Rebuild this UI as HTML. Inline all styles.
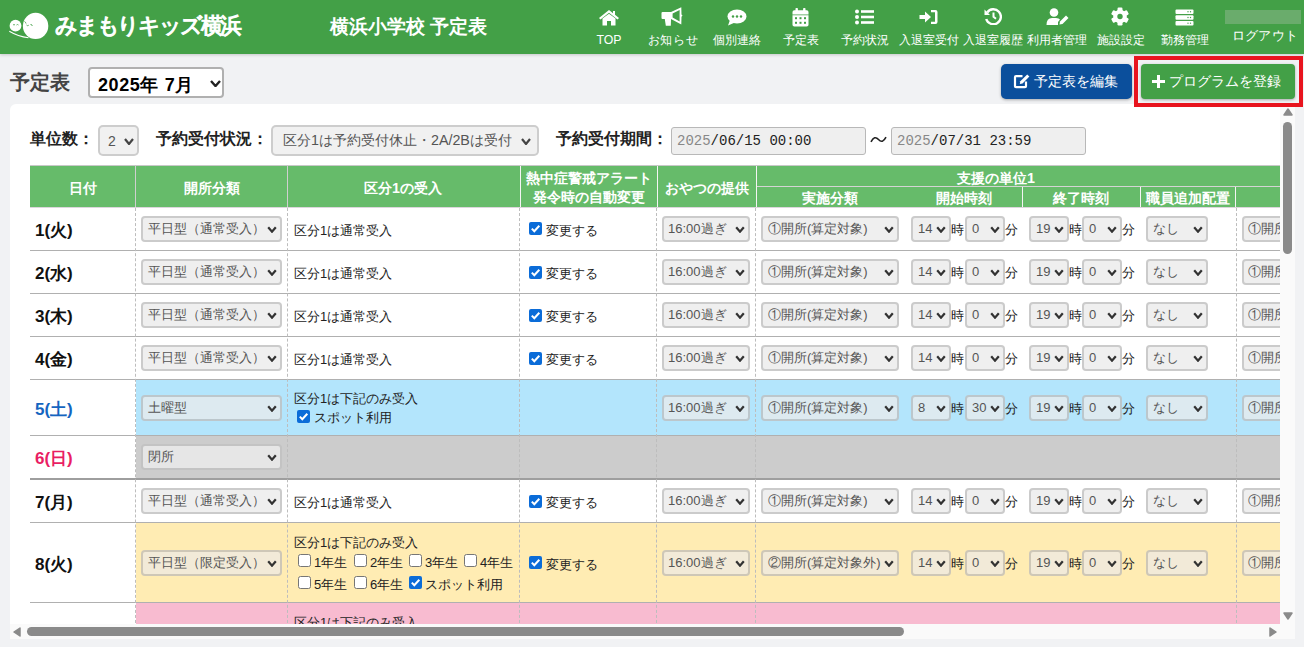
<!DOCTYPE html><html><head><meta charset="utf-8"><style>
*{box-sizing:border-box;margin:0;padding:0}
html,body{width:1304px;height:647px;overflow:hidden}
body{background:#f1f2f4;font-family:"Liberation Sans",sans-serif;position:relative;color:#222}
.abs{position:absolute}
.nav{position:absolute;top:0;left:0;width:1304px;height:54px;background:#43a047;box-shadow:0 1px 3px rgba(0,0,0,.18)}
.ni{position:absolute;top:33px;font-size:12.3px;color:#fff;white-space:nowrap;line-height:14px;text-align:center;width:80px}
.ic{position:absolute}
.sel{position:absolute;border:2px solid rgba(0,0,0,0.15);border-radius:4px;background:#f1f1f1;font-size:13px;color:#555;white-space:nowrap;overflow:hidden}
.sel .t{position:absolute;left:5px;top:4px;line-height:15px}
svg{display:block}
.txt{position:absolute;font-size:13px;color:#222;white-space:nowrap;line-height:15px}
.hd{position:absolute;font-size:14.3px;font-weight:bold;color:#fff;white-space:nowrap;text-align:center;line-height:17px}
.cb{position:absolute;width:13px;height:13px;border-radius:2px}
.cb.on{background:#0b6cd8}
.cb.off{background:#fff;border:1px solid #555}
.vd{position:absolute;width:0;border-left:1px dashed #bdbdbd}
</style></head><body><div class="nav"><svg class="abs" style="left:0px;top:5px" width="60" height="40" viewBox="0 5 60 40">
<ellipse cx="35.6" cy="25.9" rx="12.7" ry="13.1" fill="#fff"/>
<circle cx="15.5" cy="25.7" r="5.9" fill="#fff"/>
<path d="M9.3 31.3 Q18 36.5 28.5 37.8" stroke="#fff" stroke-width="1.1" fill="none"/>
<path d="M24.5 21.5 q1.2 0.5 1.5 2 M26.5 25 q1 1.2 2.2 0.3 M30.5 24.5 q1.3 -0.5 1.8 1.5" stroke="#43a047" stroke-width="0.9" fill="none"/>
<path d="M13 25 q1 -1 2 0 M16.5 25 q1 -1 2 0" stroke="#43a047" stroke-width="0.8" fill="none"/>
</svg><div class="abs" style="left:55px;top:12px;font-size:22px;font-weight:normal;color:#fff;line-height:28px;letter-spacing:-2.2px;white-space:nowrap;-webkit-text-stroke:1.1px #fff">みまもりキッズ横浜</div><div class="abs" style="left:330px;top:16px;font-size:19px;font-weight:bold;color:#fff;line-height:22px;white-space:nowrap">横浜小学校 予定表</div><div class="ic" style="left:598px;top:9px"><svg width="22" height="17" viewBox="0 0 22 17"><path d="M11 1 L1 9 L2.5 10.5 L11 3.8 L19.5 10.5 L21 9 L17 5.8 V2 H15 V4.2 Z" fill="#fff"/><path d="M4.5 9.5 L11 4.8 L17.5 9.5 V16.5 H13 V12 H9 V16.5 H4.5 Z" fill="#fff"/></svg></div><div class="ni" style="left:569px;">TOP</div><div class="ic" style="left:661px;top:7px"><svg width="22" height="20" viewBox="0 0 22 20"><path d="M1.5 5 H10 V12 H1.5 Q0.5 12 0.5 11 V6 Q0.5 5 1.5 5 Z" fill="#fff"/><path d="M3.8 12 H10 L9.8 18.7 H4.8 Z" fill="#fff"/><path d="M10 5 L20.3 0.3 L20.5 7.5 L21.5 8.6 L20.5 9.7 L20.3 17.5 L10 12 Z" fill="#fff"/><path d="M11.6 6.6 L18.6 3 V14.6 L11.6 10.6 Z" fill="#43a047"/></svg></div><div class="ni" style="left:633px;letter-spacing:0.6px;">お知らせ</div><div class="ic" style="left:727px;top:9px"><svg width="20" height="17" viewBox="0 0 20 17"><ellipse cx="10" cy="7.5" rx="9.5" ry="7" fill="#fff"/><path d="M3 11 L1 16.5 L8 13.5 Z" fill="#fff"/><circle cx="6" cy="7.5" r="1.2" fill="#43a047"/><circle cx="10" cy="7.5" r="1.2" fill="#43a047"/><circle cx="14" cy="7.5" r="1.2" fill="#43a047"/></svg></div><div class="ni" style="left:697px;">個別連絡</div><div class="ic" style="left:792px;top:8px"><svg width="17" height="19" viewBox="0 0 17 19"><g fill="#fff"><rect x="3.5" y="0" width="2.4" height="4" rx="0.8"/><rect x="11.1" y="0" width="2.4" height="4" rx="0.8"/><path d="M0.5 4 Q0.5 2.2 2.3 2.2 H14.7 Q16.5 2.2 16.5 4 V6.4 H0.5 Z"/><path d="M0.5 7.2 H16.5 V16.8 Q16.5 18.5 14.7 18.5 H2.3 Q0.5 18.5 0.5 16.8 Z"/></g><g fill="#43a047"><rect x="3" y="9.2" width="2" height="2"/><rect x="7.5" y="9.2" width="2" height="2"/><rect x="12" y="9.2" width="2" height="2"/><rect x="3" y="13.8" width="2" height="2"/><rect x="7.5" y="13.8" width="2" height="2"/><rect x="12" y="13.8" width="2" height="2"/></g></svg></div><div class="ni" style="left:761px;">予定表</div><div class="ic" style="left:855px;top:9px"><svg width="19" height="16" viewBox="0 0 19 16"><circle cx="2" cy="2.5" r="2" fill="#fff"/><circle cx="2" cy="8" r="2" fill="#fff"/><circle cx="2" cy="13.5" r="2" fill="#fff"/><rect x="6" y="1.2" width="13" height="2.6" fill="#fff"/><rect x="6" y="6.7" width="13" height="2.6" fill="#fff"/><rect x="6" y="12.2" width="13" height="2.6" fill="#fff"/></svg></div><div class="ni" style="left:825px;">予約状況</div><div class="ic" style="left:919px;top:9px"><svg width="19" height="16" viewBox="0 0 19 16"><path d="M0.5 6 H6 V2.5 L12 8 L6 13.5 V10 H0.5 Z" fill="#fff"/><path d="M12 1 H16.5 Q18.5 1 18.5 3 V13 Q18.5 15 16.5 15 H12 V12.8 H16 V3.2 H12 Z" fill="#fff"/></svg></div><div class="ni" style="left:889px;letter-spacing:-0.1px;">入退室受付</div><div class="ic" style="left:984px;top:8px"><svg width="18" height="17" viewBox="0 0 18 17"><path d="M3.2 4.5 A7.5 7.5 0 1 1 2.2 11" stroke="#fff" stroke-width="2.4" fill="none"/><path d="M0.5 1.5 L6 7 H0.5 Z" fill="#fff"/><path d="M9.5 4.5 V8.8 L12 10.8" stroke="#fff" stroke-width="2" fill="none"/></svg></div><div class="ni" style="left:953px;letter-spacing:-0.1px;">入退室履歴</div><div class="ic" style="left:1046px;top:8px"><svg width="23" height="17" viewBox="0 0 23 17"><circle cx="8" cy="4.5" r="4.3" fill="#fff"/><path d="M0.5 17 Q0.5 10 6 10 H10 Q13 10 14 11.5 L12 14 V17 Z" fill="#fff"/><path d="M13.5 16.5 L14 13.5 L20 7.5 L22.5 10 L16.5 16 Z" fill="#fff"/></svg></div><div class="ni" style="left:1017px;letter-spacing:-0.1px;">利用者管理</div><div class="ic" style="left:1111px;top:7px"><svg width="18" height="19" viewBox="0 0 18 19"><g fill="#fff"><circle cx="9" cy="9.5" r="6.8"/><rect x="6.5" y="0.5" width="5" height="18" rx="1.2"/><rect x="6.5" y="0.5" width="5" height="18" rx="1.2" transform="rotate(60 9 9.5)"/><rect x="6.5" y="0.5" width="5" height="18" rx="1.2" transform="rotate(120 9 9.5)"/></g><circle cx="9" cy="9.5" r="2.7" fill="#43a047"/></svg></div><div class="ni" style="left:1081px;">施設設定</div><div class="ic" style="left:1175px;top:9px"><svg width="19" height="17" viewBox="0 0 19 17"><g fill="#fff"><rect x="0.5" y="0.5" width="18" height="4.5" rx="1"/><rect x="0.5" y="6.2" width="18" height="4.5" rx="1"/><rect x="0.5" y="11.9" width="18" height="4.5" rx="1"/></g><g fill="#43a047"><circle cx="13" cy="2.75" r=".7"/><circle cx="15.5" cy="2.75" r=".7"/><circle cx="13" cy="8.45" r=".7"/><circle cx="15.5" cy="8.45" r=".7"/><circle cx="13" cy="14.15" r=".7"/><circle cx="15.5" cy="14.15" r=".7"/></g></svg></div><div class="ni" style="left:1145px;">勤務管理</div><div class="abs" style="left:1225px;top:10px;width:76px;height:14px;background:#6aac6c"></div><div class="ni" style="left:1225px;top:29px;font-size:13px;letter-spacing:0.3px">ログアウト</div></div><div class="abs" style="left:10px;top:70px;font-size:20px;font-weight:bold;color:#444;line-height:24px">予定表</div><div class="abs" style="left:88px;top:67px;width:136px;height:31px;border:2px solid #b0b0b0;border-radius:4px;background:#fff"><div class="abs" style="left:8px;top:6px;font-size:18px;font-weight:bold;color:#000;line-height:20px;white-space:nowrap;letter-spacing:0.6px">2025年 7月</div><div class="abs" style="left:120px;top:11px"><svg width="11" height="7" viewBox="0 0 11 7"><path d="M1 1 L5.5 6 L10 1" stroke="#222" stroke-width="2.4" fill="none"/></svg></div></div><div class="abs" style="left:1001px;top:64px;width:131px;height:35px;background:#0b4f9c;border-radius:5px;box-shadow:0 1px 3px rgba(0,0,0,.3)"></div><svg class="abs" style="left:1013px;top:73px" width="18" height="16" viewBox="0 0 18 16"><path d="M9.5 3.2 H3 Q2 3.2 2 4.2 V13.2 Q2 14.2 3 14.2 H12 Q13 14.2 13 13.2 V8.5" stroke="#fff" stroke-width="2.2" fill="none"/><path d="M6.8 11 L7.3 8.3 L14.2 1.4 L16.4 3.6 L9.5 10.5 Z" fill="#fff"/></svg><div class="abs" style="left:1034px;top:73px;font-size:14.2px;color:#fff;line-height:17px;white-space:nowrap">予定表を編集</div><div class="abs" style="left:1141px;top:64px;width:154px;height:35px;background:#43a047;border-radius:4px;box-shadow:0 1px 3px rgba(0,0,0,.3)"></div><svg class="abs" style="left:1152px;top:75px" width="13" height="13" viewBox="0 0 13 13"><rect x="5" y="0" width="3" height="13" fill="#fff"/><rect x="0" y="5" width="13" height="3" fill="#fff"/></svg><div class="abs" style="left:1169px;top:73px;font-size:14.2px;color:#fff;line-height:17px;white-space:nowrap">プログラムを登録</div><div class="abs" style="left:10px;top:104px;width:1285px;height:535px;background:#fff;border-radius:6px 6px 0 0"></div><div class="abs" style="left:30px;top:130px;font-size:16px;font-weight:bold;color:#222;line-height:18px;white-space:nowrap">単位数：</div><div class="sel" style="left:98px;top:125px;width:41px;height:31px;border-radius:5px"><div class="t" style="left:8px;top:6px;font-size:14px;line-height:17px">2</div><div class="abs" style="left:24px;top:11px"><svg width="10" height="7" viewBox="0 0 10 7"><path d="M1 1 L5.0 6 L9 1" stroke="#444" stroke-width="2.2" fill="none"/></svg></div></div><div class="abs" style="left:156px;top:130px;font-size:16px;font-weight:bold;color:#222;line-height:18px;white-space:nowrap">予約受付状況：</div><div class="sel" style="left:271px;top:125px;width:268px;height:31px;border-radius:5px"><div class="t" style="left:10px;top:5px;font-size:14.3px;line-height:17px">区分1は予約受付休止・2A/2Bは受付</div><div class="abs" style="left:248px;top:11px"><svg width="10" height="7" viewBox="0 0 10 7"><path d="M1 1 L5.0 6 L9 1" stroke="#444" stroke-width="2.2" fill="none"/></svg></div></div><div class="abs" style="left:556px;top:130px;font-size:16px;font-weight:bold;color:#222;line-height:18px;white-space:nowrap">予約受付期間：</div><div class="abs" style="left:671px;top:127px;width:195px;height:28px;border:1.5px solid #b8b8b8;border-radius:3px;background:#efefef"><div class="abs" style="left:5px;top:5px;font-family:'Liberation Mono',monospace;font-size:14px;line-height:16px;color:#222;white-space:nowrap"><span style="color:#888">2025</span>/06/15 00:00</div></div><div class="abs" style="left:891px;top:127px;width:195px;height:28px;border:1.5px solid #b8b8b8;border-radius:3px;background:#efefef"><div class="abs" style="left:5px;top:5px;font-family:'Liberation Mono',monospace;font-size:14px;line-height:16px;color:#222;white-space:nowrap"><span style="color:#888">2025</span>/07/31 23:59</div></div><svg class="abs" style="left:870px;top:135px" width="17" height="9" viewBox="0 0 17 9"><path d="M1 6.8 Q4.5 0 8.5 4.5 Q12.5 9 16 2.2" stroke="#222" stroke-width="1.6" fill="none"/></svg><div class="abs" style="left:0;top:0;width:1280px;height:624px;overflow:hidden"><div class="abs" style="left:30px;top:165px;width:1260px;height:1px;background:#c8c8c8"></div><div class="abs" style="left:30px;top:166px;width:1260px;height:41px;background:#66bb6a"></div><div class="abs" style="left:135px;top:166px;width:1px;height:41px;background:#cfcfcf"></div><div class="abs" style="left:287px;top:166px;width:1px;height:41px;background:#cfcfcf"></div><div class="abs" style="left:520px;top:166px;width:1px;height:41px;background:#f4f4f4"></div><div class="abs" style="left:657px;top:166px;width:1px;height:41px;background:#f4f4f4"></div><div class="abs" style="left:756px;top:166px;width:1px;height:41px;background:#f4f4f4"></div><div class="abs" style="left:757px;top:186px;width:540px;height:1px;background:#d4d4d4"></div><div class="abs" style="left:1022px;top:187px;width:1px;height:20px;background:#f4f4f4"></div><div class="abs" style="left:1140px;top:187px;width:1px;height:20px;background:#f4f4f4"></div><div class="abs" style="left:1235px;top:187px;width:1px;height:20px;background:#f4f4f4"></div><div class="abs" style="left:30px;top:207px;width:1260px;height:1px;background:#dcd6dc"></div><div class="hd" style="left:-17.0px;top:180px;width:200px">日付</div><div class="hd" style="left:112.0px;top:180px;width:200px">開所分類</div><div class="hd" style="left:303.0px;top:180px;width:200px">区分1の受入</div><div class="hd" style="left:489.0px;top:170px;width:200px">熱中症警戒アラート</div><div class="hd" style="left:489.0px;top:189px;width:200px">発令時の自動変更</div><div class="hd" style="left:607.0px;top:180px;width:200px">おやつの提供</div><div class="hd" style="left:896.0px;top:170px;width:200px">支援の単位1</div><div class="hd" style="left:730.0px;top:190px;width:200px">実施分類</div><div class="hd" style="left:864.0px;top:190px;width:200px">開始時刻</div><div class="hd" style="left:981.0px;top:190px;width:200px">終了時刻</div><div class="hd" style="left:1088.0px;top:190px;width:200px">職員追加配置</div><div class="abs" style="left:30px;top:250px;width:1260px;height:1px;background:#b0b0b0"></div><div class="abs" style="left:35px;top:220.5px;font-size:17px;font-weight:bold;color:#111;line-height:20px;white-space:nowrap">1(火)</div><div class="sel" style="left:141px;top:216px;width:141px;height:26px;background:#efefef"><div class="t" style="left:5px;top:3px">平日型（通常受入）</div><div class="abs" style="left:124px;top:8px"><svg width="10" height="7" viewBox="0 0 10 7"><path d="M1.2 1.2 L5.0 5.7 L8.8 1.2" stroke="#333" stroke-width="2.2" fill="none"/></svg></div></div><div class="txt" style="left:294px;top:222.5px">区分1は通常受入</div><svg class="abs" style="left:529px;top:222px" width="13" height="13" viewBox="0 0 13 13"><rect x="0" y="0" width="13" height="13" rx="2" fill="#0b6cd8"/><path d="M2.8 6.6 L5.3 9.2 L10.3 3.8" stroke="#fff" stroke-width="2" fill="none"/></svg><div class="txt" style="left:546px;top:222.5px">変更する</div><div class="sel" style="left:662px;top:216px;width:88px;height:26px;background:#efefef"><div class="t" style="left:4px;top:3px">16:00過ぎ</div><div class="abs" style="left:71px;top:8px"><svg width="10" height="7" viewBox="0 0 10 7"><path d="M1.2 1.2 L5.0 5.7 L8.8 1.2" stroke="#333" stroke-width="2.2" fill="none"/></svg></div></div><div class="sel" style="left:761px;top:216px;width:138px;height:26px;background:#efefef"><div class="t" style="left:5px;top:3px">①開所(算定対象)</div><div class="abs" style="left:121px;top:8px"><svg width="10" height="7" viewBox="0 0 10 7"><path d="M1.2 1.2 L5.0 5.7 L8.8 1.2" stroke="#333" stroke-width="2.2" fill="none"/></svg></div></div><div class="sel" style="left:911px;top:216px;width:40px;height:26px;background:#efefef"><div class="t" style="left:5px;top:3px">14</div><div class="abs" style="left:23px;top:8px"><svg width="10" height="7" viewBox="0 0 10 7"><path d="M1.2 1.2 L5.0 5.7 L8.8 1.2" stroke="#333" stroke-width="2.2" fill="none"/></svg></div></div><div class="txt" style="left:951px;top:221.5px">時</div><div class="sel" style="left:965px;top:216px;width:40px;height:26px;background:#efefef"><div class="t" style="left:5px;top:3px">0</div><div class="abs" style="left:23px;top:8px"><svg width="10" height="7" viewBox="0 0 10 7"><path d="M1.2 1.2 L5.0 5.7 L8.8 1.2" stroke="#333" stroke-width="2.2" fill="none"/></svg></div></div><div class="txt" style="left:1005px;top:221.5px">分</div><div class="sel" style="left:1029px;top:216px;width:40px;height:26px;background:#efefef"><div class="t" style="left:5px;top:3px">19</div><div class="abs" style="left:23px;top:8px"><svg width="10" height="7" viewBox="0 0 10 7"><path d="M1.2 1.2 L5.0 5.7 L8.8 1.2" stroke="#333" stroke-width="2.2" fill="none"/></svg></div></div><div class="txt" style="left:1069px;top:221.5px">時</div><div class="sel" style="left:1082px;top:216px;width:40px;height:26px;background:#efefef"><div class="t" style="left:5px;top:3px">0</div><div class="abs" style="left:23px;top:8px"><svg width="10" height="7" viewBox="0 0 10 7"><path d="M1.2 1.2 L5.0 5.7 L8.8 1.2" stroke="#333" stroke-width="2.2" fill="none"/></svg></div></div><div class="txt" style="left:1122px;top:221.5px">分</div><div class="sel" style="left:1146px;top:216px;width:62px;height:26px;background:#efefef"><div class="t" style="left:5px;top:3px">なし</div><div class="abs" style="left:45px;top:8px"><svg width="10" height="7" viewBox="0 0 10 7"><path d="M1.2 1.2 L5.0 5.7 L8.8 1.2" stroke="#333" stroke-width="2.2" fill="none"/></svg></div></div><div class="sel" style="left:1242px;top:216px;width:140px;height:26px;background:#efefef"><div class="t" style="left:4px;top:3px">①開所(算定対象)</div><div class="abs" style="left:123px;top:8px"><svg width="10" height="7" viewBox="0 0 10 7"><path d="M1.2 1.2 L5.0 5.7 L8.8 1.2" stroke="#333" stroke-width="2.2" fill="none"/></svg></div></div><div class="abs" style="left:30px;top:293px;width:1260px;height:1px;background:#b0b0b0"></div><div class="abs" style="left:35px;top:264.0px;font-size:17px;font-weight:bold;color:#111;line-height:20px;white-space:nowrap">2(水)</div><div class="sel" style="left:141px;top:259px;width:141px;height:26px;background:#efefef"><div class="t" style="left:5px;top:3px">平日型（通常受入）</div><div class="abs" style="left:124px;top:8px"><svg width="10" height="7" viewBox="0 0 10 7"><path d="M1.2 1.2 L5.0 5.7 L8.8 1.2" stroke="#333" stroke-width="2.2" fill="none"/></svg></div></div><div class="txt" style="left:294px;top:266.0px">区分1は通常受入</div><svg class="abs" style="left:529px;top:266px" width="13" height="13" viewBox="0 0 13 13"><rect x="0" y="0" width="13" height="13" rx="2" fill="#0b6cd8"/><path d="M2.8 6.6 L5.3 9.2 L10.3 3.8" stroke="#fff" stroke-width="2" fill="none"/></svg><div class="txt" style="left:546px;top:266.0px">変更する</div><div class="sel" style="left:662px;top:259px;width:88px;height:26px;background:#efefef"><div class="t" style="left:4px;top:3px">16:00過ぎ</div><div class="abs" style="left:71px;top:8px"><svg width="10" height="7" viewBox="0 0 10 7"><path d="M1.2 1.2 L5.0 5.7 L8.8 1.2" stroke="#333" stroke-width="2.2" fill="none"/></svg></div></div><div class="sel" style="left:761px;top:259px;width:138px;height:26px;background:#efefef"><div class="t" style="left:5px;top:3px">①開所(算定対象)</div><div class="abs" style="left:121px;top:8px"><svg width="10" height="7" viewBox="0 0 10 7"><path d="M1.2 1.2 L5.0 5.7 L8.8 1.2" stroke="#333" stroke-width="2.2" fill="none"/></svg></div></div><div class="sel" style="left:911px;top:259px;width:40px;height:26px;background:#efefef"><div class="t" style="left:5px;top:3px">14</div><div class="abs" style="left:23px;top:8px"><svg width="10" height="7" viewBox="0 0 10 7"><path d="M1.2 1.2 L5.0 5.7 L8.8 1.2" stroke="#333" stroke-width="2.2" fill="none"/></svg></div></div><div class="txt" style="left:951px;top:265.0px">時</div><div class="sel" style="left:965px;top:259px;width:40px;height:26px;background:#efefef"><div class="t" style="left:5px;top:3px">0</div><div class="abs" style="left:23px;top:8px"><svg width="10" height="7" viewBox="0 0 10 7"><path d="M1.2 1.2 L5.0 5.7 L8.8 1.2" stroke="#333" stroke-width="2.2" fill="none"/></svg></div></div><div class="txt" style="left:1005px;top:265.0px">分</div><div class="sel" style="left:1029px;top:259px;width:40px;height:26px;background:#efefef"><div class="t" style="left:5px;top:3px">19</div><div class="abs" style="left:23px;top:8px"><svg width="10" height="7" viewBox="0 0 10 7"><path d="M1.2 1.2 L5.0 5.7 L8.8 1.2" stroke="#333" stroke-width="2.2" fill="none"/></svg></div></div><div class="txt" style="left:1069px;top:265.0px">時</div><div class="sel" style="left:1082px;top:259px;width:40px;height:26px;background:#efefef"><div class="t" style="left:5px;top:3px">0</div><div class="abs" style="left:23px;top:8px"><svg width="10" height="7" viewBox="0 0 10 7"><path d="M1.2 1.2 L5.0 5.7 L8.8 1.2" stroke="#333" stroke-width="2.2" fill="none"/></svg></div></div><div class="txt" style="left:1122px;top:265.0px">分</div><div class="sel" style="left:1146px;top:259px;width:62px;height:26px;background:#efefef"><div class="t" style="left:5px;top:3px">なし</div><div class="abs" style="left:45px;top:8px"><svg width="10" height="7" viewBox="0 0 10 7"><path d="M1.2 1.2 L5.0 5.7 L8.8 1.2" stroke="#333" stroke-width="2.2" fill="none"/></svg></div></div><div class="sel" style="left:1242px;top:259px;width:140px;height:26px;background:#efefef"><div class="t" style="left:4px;top:3px">①開所(算定対象)</div><div class="abs" style="left:123px;top:8px"><svg width="10" height="7" viewBox="0 0 10 7"><path d="M1.2 1.2 L5.0 5.7 L8.8 1.2" stroke="#333" stroke-width="2.2" fill="none"/></svg></div></div><div class="abs" style="left:30px;top:336px;width:1260px;height:1px;background:#b0b0b0"></div><div class="abs" style="left:35px;top:307.0px;font-size:17px;font-weight:bold;color:#111;line-height:20px;white-space:nowrap">3(木)</div><div class="sel" style="left:141px;top:302px;width:141px;height:26px;background:#efefef"><div class="t" style="left:5px;top:3px">平日型（通常受入）</div><div class="abs" style="left:124px;top:8px"><svg width="10" height="7" viewBox="0 0 10 7"><path d="M1.2 1.2 L5.0 5.7 L8.8 1.2" stroke="#333" stroke-width="2.2" fill="none"/></svg></div></div><div class="txt" style="left:294px;top:309.0px">区分1は通常受入</div><svg class="abs" style="left:529px;top:309px" width="13" height="13" viewBox="0 0 13 13"><rect x="0" y="0" width="13" height="13" rx="2" fill="#0b6cd8"/><path d="M2.8 6.6 L5.3 9.2 L10.3 3.8" stroke="#fff" stroke-width="2" fill="none"/></svg><div class="txt" style="left:546px;top:309.0px">変更する</div><div class="sel" style="left:662px;top:302px;width:88px;height:26px;background:#efefef"><div class="t" style="left:4px;top:3px">16:00過ぎ</div><div class="abs" style="left:71px;top:8px"><svg width="10" height="7" viewBox="0 0 10 7"><path d="M1.2 1.2 L5.0 5.7 L8.8 1.2" stroke="#333" stroke-width="2.2" fill="none"/></svg></div></div><div class="sel" style="left:761px;top:302px;width:138px;height:26px;background:#efefef"><div class="t" style="left:5px;top:3px">①開所(算定対象)</div><div class="abs" style="left:121px;top:8px"><svg width="10" height="7" viewBox="0 0 10 7"><path d="M1.2 1.2 L5.0 5.7 L8.8 1.2" stroke="#333" stroke-width="2.2" fill="none"/></svg></div></div><div class="sel" style="left:911px;top:302px;width:40px;height:26px;background:#efefef"><div class="t" style="left:5px;top:3px">14</div><div class="abs" style="left:23px;top:8px"><svg width="10" height="7" viewBox="0 0 10 7"><path d="M1.2 1.2 L5.0 5.7 L8.8 1.2" stroke="#333" stroke-width="2.2" fill="none"/></svg></div></div><div class="txt" style="left:951px;top:308.0px">時</div><div class="sel" style="left:965px;top:302px;width:40px;height:26px;background:#efefef"><div class="t" style="left:5px;top:3px">0</div><div class="abs" style="left:23px;top:8px"><svg width="10" height="7" viewBox="0 0 10 7"><path d="M1.2 1.2 L5.0 5.7 L8.8 1.2" stroke="#333" stroke-width="2.2" fill="none"/></svg></div></div><div class="txt" style="left:1005px;top:308.0px">分</div><div class="sel" style="left:1029px;top:302px;width:40px;height:26px;background:#efefef"><div class="t" style="left:5px;top:3px">19</div><div class="abs" style="left:23px;top:8px"><svg width="10" height="7" viewBox="0 0 10 7"><path d="M1.2 1.2 L5.0 5.7 L8.8 1.2" stroke="#333" stroke-width="2.2" fill="none"/></svg></div></div><div class="txt" style="left:1069px;top:308.0px">時</div><div class="sel" style="left:1082px;top:302px;width:40px;height:26px;background:#efefef"><div class="t" style="left:5px;top:3px">0</div><div class="abs" style="left:23px;top:8px"><svg width="10" height="7" viewBox="0 0 10 7"><path d="M1.2 1.2 L5.0 5.7 L8.8 1.2" stroke="#333" stroke-width="2.2" fill="none"/></svg></div></div><div class="txt" style="left:1122px;top:308.0px">分</div><div class="sel" style="left:1146px;top:302px;width:62px;height:26px;background:#efefef"><div class="t" style="left:5px;top:3px">なし</div><div class="abs" style="left:45px;top:8px"><svg width="10" height="7" viewBox="0 0 10 7"><path d="M1.2 1.2 L5.0 5.7 L8.8 1.2" stroke="#333" stroke-width="2.2" fill="none"/></svg></div></div><div class="sel" style="left:1242px;top:302px;width:140px;height:26px;background:#efefef"><div class="t" style="left:4px;top:3px">①開所(算定対象)</div><div class="abs" style="left:123px;top:8px"><svg width="10" height="7" viewBox="0 0 10 7"><path d="M1.2 1.2 L5.0 5.7 L8.8 1.2" stroke="#333" stroke-width="2.2" fill="none"/></svg></div></div><div class="abs" style="left:30px;top:379px;width:1260px;height:1px;background:#b0b0b0"></div><div class="abs" style="left:35px;top:350.0px;font-size:17px;font-weight:bold;color:#111;line-height:20px;white-space:nowrap">4(金)</div><div class="sel" style="left:141px;top:345px;width:141px;height:26px;background:#efefef"><div class="t" style="left:5px;top:3px">平日型（通常受入）</div><div class="abs" style="left:124px;top:8px"><svg width="10" height="7" viewBox="0 0 10 7"><path d="M1.2 1.2 L5.0 5.7 L8.8 1.2" stroke="#333" stroke-width="2.2" fill="none"/></svg></div></div><div class="txt" style="left:294px;top:352.0px">区分1は通常受入</div><svg class="abs" style="left:529px;top:352px" width="13" height="13" viewBox="0 0 13 13"><rect x="0" y="0" width="13" height="13" rx="2" fill="#0b6cd8"/><path d="M2.8 6.6 L5.3 9.2 L10.3 3.8" stroke="#fff" stroke-width="2" fill="none"/></svg><div class="txt" style="left:546px;top:352.0px">変更する</div><div class="sel" style="left:662px;top:345px;width:88px;height:26px;background:#efefef"><div class="t" style="left:4px;top:3px">16:00過ぎ</div><div class="abs" style="left:71px;top:8px"><svg width="10" height="7" viewBox="0 0 10 7"><path d="M1.2 1.2 L5.0 5.7 L8.8 1.2" stroke="#333" stroke-width="2.2" fill="none"/></svg></div></div><div class="sel" style="left:761px;top:345px;width:138px;height:26px;background:#efefef"><div class="t" style="left:5px;top:3px">①開所(算定対象)</div><div class="abs" style="left:121px;top:8px"><svg width="10" height="7" viewBox="0 0 10 7"><path d="M1.2 1.2 L5.0 5.7 L8.8 1.2" stroke="#333" stroke-width="2.2" fill="none"/></svg></div></div><div class="sel" style="left:911px;top:345px;width:40px;height:26px;background:#efefef"><div class="t" style="left:5px;top:3px">14</div><div class="abs" style="left:23px;top:8px"><svg width="10" height="7" viewBox="0 0 10 7"><path d="M1.2 1.2 L5.0 5.7 L8.8 1.2" stroke="#333" stroke-width="2.2" fill="none"/></svg></div></div><div class="txt" style="left:951px;top:351.0px">時</div><div class="sel" style="left:965px;top:345px;width:40px;height:26px;background:#efefef"><div class="t" style="left:5px;top:3px">0</div><div class="abs" style="left:23px;top:8px"><svg width="10" height="7" viewBox="0 0 10 7"><path d="M1.2 1.2 L5.0 5.7 L8.8 1.2" stroke="#333" stroke-width="2.2" fill="none"/></svg></div></div><div class="txt" style="left:1005px;top:351.0px">分</div><div class="sel" style="left:1029px;top:345px;width:40px;height:26px;background:#efefef"><div class="t" style="left:5px;top:3px">19</div><div class="abs" style="left:23px;top:8px"><svg width="10" height="7" viewBox="0 0 10 7"><path d="M1.2 1.2 L5.0 5.7 L8.8 1.2" stroke="#333" stroke-width="2.2" fill="none"/></svg></div></div><div class="txt" style="left:1069px;top:351.0px">時</div><div class="sel" style="left:1082px;top:345px;width:40px;height:26px;background:#efefef"><div class="t" style="left:5px;top:3px">0</div><div class="abs" style="left:23px;top:8px"><svg width="10" height="7" viewBox="0 0 10 7"><path d="M1.2 1.2 L5.0 5.7 L8.8 1.2" stroke="#333" stroke-width="2.2" fill="none"/></svg></div></div><div class="txt" style="left:1122px;top:351.0px">分</div><div class="sel" style="left:1146px;top:345px;width:62px;height:26px;background:#efefef"><div class="t" style="left:5px;top:3px">なし</div><div class="abs" style="left:45px;top:8px"><svg width="10" height="7" viewBox="0 0 10 7"><path d="M1.2 1.2 L5.0 5.7 L8.8 1.2" stroke="#333" stroke-width="2.2" fill="none"/></svg></div></div><div class="sel" style="left:1242px;top:345px;width:140px;height:26px;background:#efefef"><div class="t" style="left:4px;top:3px">①開所(算定対象)</div><div class="abs" style="left:123px;top:8px"><svg width="10" height="7" viewBox="0 0 10 7"><path d="M1.2 1.2 L5.0 5.7 L8.8 1.2" stroke="#333" stroke-width="2.2" fill="none"/></svg></div></div><div class="abs" style="left:136px;top:380px;width:1200px;height:55px;background:#b3e5fc"></div><div class="abs" style="left:30px;top:435px;width:1260px;height:1px;background:#b0b0b0"></div><div class="abs" style="left:35px;top:399.5px;font-size:17px;font-weight:bold;color:#1565c0;line-height:20px;white-space:nowrap">5(土)</div><div class="sel" style="left:141px;top:395px;width:141px;height:26px;background:#ddeaf0"><div class="t" style="left:5px;top:3px">土曜型</div><div class="abs" style="left:124px;top:8px"><svg width="10" height="7" viewBox="0 0 10 7"><path d="M1.2 1.2 L5.0 5.7 L8.8 1.2" stroke="#333" stroke-width="2.2" fill="none"/></svg></div></div><div class="txt" style="left:294px;top:391px">区分1は下記のみ受入</div><svg class="abs" style="left:297px;top:410px" width="13" height="13" viewBox="0 0 13 13"><rect x="0" y="0" width="13" height="13" rx="2" fill="#0b6cd8"/><path d="M2.8 6.6 L5.3 9.2 L10.3 3.8" stroke="#fff" stroke-width="2" fill="none"/></svg><div class="txt" style="left:314px;top:410px">スポット利用</div><div class="sel" style="left:662px;top:395px;width:88px;height:26px;background:#ddeaf0"><div class="t" style="left:4px;top:3px">16:00過ぎ</div><div class="abs" style="left:71px;top:8px"><svg width="10" height="7" viewBox="0 0 10 7"><path d="M1.2 1.2 L5.0 5.7 L8.8 1.2" stroke="#333" stroke-width="2.2" fill="none"/></svg></div></div><div class="sel" style="left:761px;top:395px;width:138px;height:26px;background:#ddeaf0"><div class="t" style="left:5px;top:3px">①開所(算定対象)</div><div class="abs" style="left:121px;top:8px"><svg width="10" height="7" viewBox="0 0 10 7"><path d="M1.2 1.2 L5.0 5.7 L8.8 1.2" stroke="#333" stroke-width="2.2" fill="none"/></svg></div></div><div class="sel" style="left:911px;top:395px;width:40px;height:26px;background:#ddeaf0"><div class="t" style="left:5px;top:3px">8</div><div class="abs" style="left:23px;top:8px"><svg width="10" height="7" viewBox="0 0 10 7"><path d="M1.2 1.2 L5.0 5.7 L8.8 1.2" stroke="#333" stroke-width="2.2" fill="none"/></svg></div></div><div class="txt" style="left:951px;top:400.5px">時</div><div class="sel" style="left:965px;top:395px;width:40px;height:26px;background:#ddeaf0"><div class="t" style="left:5px;top:3px">30</div><div class="abs" style="left:23px;top:8px"><svg width="10" height="7" viewBox="0 0 10 7"><path d="M1.2 1.2 L5.0 5.7 L8.8 1.2" stroke="#333" stroke-width="2.2" fill="none"/></svg></div></div><div class="txt" style="left:1005px;top:400.5px">分</div><div class="sel" style="left:1029px;top:395px;width:40px;height:26px;background:#ddeaf0"><div class="t" style="left:5px;top:3px">19</div><div class="abs" style="left:23px;top:8px"><svg width="10" height="7" viewBox="0 0 10 7"><path d="M1.2 1.2 L5.0 5.7 L8.8 1.2" stroke="#333" stroke-width="2.2" fill="none"/></svg></div></div><div class="txt" style="left:1069px;top:400.5px">時</div><div class="sel" style="left:1082px;top:395px;width:40px;height:26px;background:#ddeaf0"><div class="t" style="left:5px;top:3px">0</div><div class="abs" style="left:23px;top:8px"><svg width="10" height="7" viewBox="0 0 10 7"><path d="M1.2 1.2 L5.0 5.7 L8.8 1.2" stroke="#333" stroke-width="2.2" fill="none"/></svg></div></div><div class="txt" style="left:1122px;top:400.5px">分</div><div class="sel" style="left:1146px;top:395px;width:62px;height:26px;background:#ddeaf0"><div class="t" style="left:5px;top:3px">なし</div><div class="abs" style="left:45px;top:8px"><svg width="10" height="7" viewBox="0 0 10 7"><path d="M1.2 1.2 L5.0 5.7 L8.8 1.2" stroke="#333" stroke-width="2.2" fill="none"/></svg></div></div><div class="sel" style="left:1242px;top:395px;width:140px;height:26px;background:#ddeaf0"><div class="t" style="left:4px;top:3px">①開所(算定対象)</div><div class="abs" style="left:123px;top:8px"><svg width="10" height="7" viewBox="0 0 10 7"><path d="M1.2 1.2 L5.0 5.7 L8.8 1.2" stroke="#333" stroke-width="2.2" fill="none"/></svg></div></div><div class="abs" style="left:136px;top:436px;width:1200px;height:42px;background:#cccccc"></div><div class="abs" style="left:30px;top:478px;width:1260px;height:2px;background:#9e9e9e"></div><div class="abs" style="left:35px;top:449.0px;font-size:17px;font-weight:bold;color:#e91e63;line-height:20px;white-space:nowrap">6(日)</div><div class="sel" style="left:141px;top:444px;width:141px;height:26px;background:#e6e6e6"><div class="t" style="left:5px;top:3px">閉所</div><div class="abs" style="left:124px;top:8px"><svg width="10" height="7" viewBox="0 0 10 7"><path d="M1.2 1.2 L5.0 5.7 L8.8 1.2" stroke="#333" stroke-width="2.2" fill="none"/></svg></div></div><div class="abs" style="left:30px;top:522px;width:1260px;height:1px;background:#b0b0b0"></div><div class="abs" style="left:35px;top:493.0px;font-size:17px;font-weight:bold;color:#111;line-height:20px;white-space:nowrap">7(月)</div><div class="sel" style="left:141px;top:488px;width:141px;height:26px;background:#efefef"><div class="t" style="left:5px;top:3px">平日型（通常受入）</div><div class="abs" style="left:124px;top:8px"><svg width="10" height="7" viewBox="0 0 10 7"><path d="M1.2 1.2 L5.0 5.7 L8.8 1.2" stroke="#333" stroke-width="2.2" fill="none"/></svg></div></div><div class="txt" style="left:294px;top:495.0px">区分1は通常受入</div><svg class="abs" style="left:529px;top:495px" width="13" height="13" viewBox="0 0 13 13"><rect x="0" y="0" width="13" height="13" rx="2" fill="#0b6cd8"/><path d="M2.8 6.6 L5.3 9.2 L10.3 3.8" stroke="#fff" stroke-width="2" fill="none"/></svg><div class="txt" style="left:546px;top:495.0px">変更する</div><div class="sel" style="left:662px;top:488px;width:88px;height:26px;background:#efefef"><div class="t" style="left:4px;top:3px">16:00過ぎ</div><div class="abs" style="left:71px;top:8px"><svg width="10" height="7" viewBox="0 0 10 7"><path d="M1.2 1.2 L5.0 5.7 L8.8 1.2" stroke="#333" stroke-width="2.2" fill="none"/></svg></div></div><div class="sel" style="left:761px;top:488px;width:138px;height:26px;background:#efefef"><div class="t" style="left:5px;top:3px">①開所(算定対象)</div><div class="abs" style="left:121px;top:8px"><svg width="10" height="7" viewBox="0 0 10 7"><path d="M1.2 1.2 L5.0 5.7 L8.8 1.2" stroke="#333" stroke-width="2.2" fill="none"/></svg></div></div><div class="sel" style="left:911px;top:488px;width:40px;height:26px;background:#efefef"><div class="t" style="left:5px;top:3px">14</div><div class="abs" style="left:23px;top:8px"><svg width="10" height="7" viewBox="0 0 10 7"><path d="M1.2 1.2 L5.0 5.7 L8.8 1.2" stroke="#333" stroke-width="2.2" fill="none"/></svg></div></div><div class="txt" style="left:951px;top:494.0px">時</div><div class="sel" style="left:965px;top:488px;width:40px;height:26px;background:#efefef"><div class="t" style="left:5px;top:3px">0</div><div class="abs" style="left:23px;top:8px"><svg width="10" height="7" viewBox="0 0 10 7"><path d="M1.2 1.2 L5.0 5.7 L8.8 1.2" stroke="#333" stroke-width="2.2" fill="none"/></svg></div></div><div class="txt" style="left:1005px;top:494.0px">分</div><div class="sel" style="left:1029px;top:488px;width:40px;height:26px;background:#efefef"><div class="t" style="left:5px;top:3px">19</div><div class="abs" style="left:23px;top:8px"><svg width="10" height="7" viewBox="0 0 10 7"><path d="M1.2 1.2 L5.0 5.7 L8.8 1.2" stroke="#333" stroke-width="2.2" fill="none"/></svg></div></div><div class="txt" style="left:1069px;top:494.0px">時</div><div class="sel" style="left:1082px;top:488px;width:40px;height:26px;background:#efefef"><div class="t" style="left:5px;top:3px">0</div><div class="abs" style="left:23px;top:8px"><svg width="10" height="7" viewBox="0 0 10 7"><path d="M1.2 1.2 L5.0 5.7 L8.8 1.2" stroke="#333" stroke-width="2.2" fill="none"/></svg></div></div><div class="txt" style="left:1122px;top:494.0px">分</div><div class="sel" style="left:1146px;top:488px;width:62px;height:26px;background:#efefef"><div class="t" style="left:5px;top:3px">なし</div><div class="abs" style="left:45px;top:8px"><svg width="10" height="7" viewBox="0 0 10 7"><path d="M1.2 1.2 L5.0 5.7 L8.8 1.2" stroke="#333" stroke-width="2.2" fill="none"/></svg></div></div><div class="sel" style="left:1242px;top:488px;width:140px;height:26px;background:#efefef"><div class="t" style="left:4px;top:3px">①開所(算定対象)</div><div class="abs" style="left:123px;top:8px"><svg width="10" height="7" viewBox="0 0 10 7"><path d="M1.2 1.2 L5.0 5.7 L8.8 1.2" stroke="#333" stroke-width="2.2" fill="none"/></svg></div></div><div class="abs" style="left:136px;top:523px;width:1200px;height:79px;background:#ffecb3"></div><div class="abs" style="left:30px;top:602px;width:1260px;height:1px;background:#b0b0b0"></div><div class="abs" style="left:35px;top:554.5px;font-size:17px;font-weight:bold;color:#111;line-height:20px;white-space:nowrap">8(火)</div><div class="sel" style="left:141px;top:550px;width:141px;height:26px;background:#f2ead8"><div class="t" style="left:5px;top:3px">平日型（限定受入）</div><div class="abs" style="left:124px;top:8px"><svg width="10" height="7" viewBox="0 0 10 7"><path d="M1.2 1.2 L5.0 5.7 L8.8 1.2" stroke="#333" stroke-width="2.2" fill="none"/></svg></div></div><div class="txt" style="left:294px;top:535px">区分1は下記のみ受入</div><div class="abs" style="left:298px;top:554px;width:13px;height:13px;border:1px solid #767676;border-radius:2.5px;background:#fff"></div><div class="txt" style="left:314px;top:555px">1年生</div><div class="abs" style="left:354px;top:554px;width:13px;height:13px;border:1px solid #767676;border-radius:2.5px;background:#fff"></div><div class="txt" style="left:370px;top:555px">2年生</div><div class="abs" style="left:409px;top:554px;width:13px;height:13px;border:1px solid #767676;border-radius:2.5px;background:#fff"></div><div class="txt" style="left:425px;top:555px">3年生</div><div class="abs" style="left:464px;top:554px;width:13px;height:13px;border:1px solid #767676;border-radius:2.5px;background:#fff"></div><div class="txt" style="left:480px;top:555px">4年生</div><div class="abs" style="left:298px;top:576px;width:13px;height:13px;border:1px solid #767676;border-radius:2.5px;background:#fff"></div><div class="txt" style="left:314px;top:577px">5年生</div><div class="abs" style="left:354px;top:576px;width:13px;height:13px;border:1px solid #767676;border-radius:2.5px;background:#fff"></div><div class="txt" style="left:370px;top:577px">6年生</div><svg class="abs" style="left:409px;top:576px" width="13" height="13" viewBox="0 0 13 13"><rect x="0" y="0" width="13" height="13" rx="2" fill="#0b6cd8"/><path d="M2.8 6.6 L5.3 9.2 L10.3 3.8" stroke="#fff" stroke-width="2" fill="none"/></svg><div class="txt" style="left:425px;top:577px">スポット利用</div><svg class="abs" style="left:529px;top:556px" width="13" height="13" viewBox="0 0 13 13"><rect x="0" y="0" width="13" height="13" rx="2" fill="#0b6cd8"/><path d="M2.8 6.6 L5.3 9.2 L10.3 3.8" stroke="#fff" stroke-width="2" fill="none"/></svg><div class="txt" style="left:546px;top:556.5px">変更する</div><div class="sel" style="left:662px;top:550px;width:88px;height:26px;background:#f2ead8"><div class="t" style="left:4px;top:3px">16:00過ぎ</div><div class="abs" style="left:71px;top:8px"><svg width="10" height="7" viewBox="0 0 10 7"><path d="M1.2 1.2 L5.0 5.7 L8.8 1.2" stroke="#333" stroke-width="2.2" fill="none"/></svg></div></div><div class="sel" style="left:761px;top:550px;width:138px;height:26px;background:#f2ead8"><div class="t" style="left:5px;top:3px">②開所(算定対象外)</div><div class="abs" style="left:121px;top:8px"><svg width="10" height="7" viewBox="0 0 10 7"><path d="M1.2 1.2 L5.0 5.7 L8.8 1.2" stroke="#333" stroke-width="2.2" fill="none"/></svg></div></div><div class="sel" style="left:911px;top:550px;width:40px;height:26px;background:#f2ead8"><div class="t" style="left:5px;top:3px">14</div><div class="abs" style="left:23px;top:8px"><svg width="10" height="7" viewBox="0 0 10 7"><path d="M1.2 1.2 L5.0 5.7 L8.8 1.2" stroke="#333" stroke-width="2.2" fill="none"/></svg></div></div><div class="txt" style="left:951px;top:555.5px">時</div><div class="sel" style="left:965px;top:550px;width:40px;height:26px;background:#f2ead8"><div class="t" style="left:5px;top:3px">0</div><div class="abs" style="left:23px;top:8px"><svg width="10" height="7" viewBox="0 0 10 7"><path d="M1.2 1.2 L5.0 5.7 L8.8 1.2" stroke="#333" stroke-width="2.2" fill="none"/></svg></div></div><div class="txt" style="left:1005px;top:555.5px">分</div><div class="sel" style="left:1029px;top:550px;width:40px;height:26px;background:#f2ead8"><div class="t" style="left:5px;top:3px">19</div><div class="abs" style="left:23px;top:8px"><svg width="10" height="7" viewBox="0 0 10 7"><path d="M1.2 1.2 L5.0 5.7 L8.8 1.2" stroke="#333" stroke-width="2.2" fill="none"/></svg></div></div><div class="txt" style="left:1069px;top:555.5px">時</div><div class="sel" style="left:1082px;top:550px;width:40px;height:26px;background:#f2ead8"><div class="t" style="left:5px;top:3px">0</div><div class="abs" style="left:23px;top:8px"><svg width="10" height="7" viewBox="0 0 10 7"><path d="M1.2 1.2 L5.0 5.7 L8.8 1.2" stroke="#333" stroke-width="2.2" fill="none"/></svg></div></div><div class="txt" style="left:1122px;top:555.5px">分</div><div class="sel" style="left:1146px;top:550px;width:62px;height:26px;background:#f2ead8"><div class="t" style="left:5px;top:3px">なし</div><div class="abs" style="left:45px;top:8px"><svg width="10" height="7" viewBox="0 0 10 7"><path d="M1.2 1.2 L5.0 5.7 L8.8 1.2" stroke="#333" stroke-width="2.2" fill="none"/></svg></div></div><div class="sel" style="left:1242px;top:550px;width:140px;height:26px;background:#f2ead8"><div class="t" style="left:4px;top:3px">①開所(算定対象)</div><div class="abs" style="left:123px;top:8px"><svg width="10" height="7" viewBox="0 0 10 7"><path d="M1.2 1.2 L5.0 5.7 L8.8 1.2" stroke="#333" stroke-width="2.2" fill="none"/></svg></div></div><div class="abs" style="left:136px;top:603px;width:1200px;height:97px;background:#f8bbd0"></div><div class="txt" style="left:294px;top:615px">区分1は下記のみ受入</div><div class="vd" style="left:135px;top:208px;height:420px"></div><div class="vd" style="left:287px;top:208px;height:420px"></div><div class="vd" style="left:519px;top:208px;height:420px"></div><div class="vd" style="left:656px;top:208px;height:420px"></div><div class="vd" style="left:755px;top:208px;height:420px"></div><div class="vd" style="left:1236px;top:208px;height:420px"></div></div><div class="abs" style="left:1280px;top:104px;width:15px;height:535px;background:#fafafa"></div><svg class="abs" style="left:1283px;top:108px" width="10" height="8" viewBox="0 0 10 8"><path d="M1 7 L5 1 L9 7 Z" fill="#8a8a8a" stroke="#8a8a8a" stroke-width="1.5" stroke-linejoin="round"/></svg><div class="abs" style="left:1283px;top:122px;width:9px;height:132px;background:#8a8a8a;border-radius:5px"></div><svg class="abs" style="left:1283px;top:612px" width="10" height="8" viewBox="0 0 10 8"><path d="M1 1 L5 7 L9 1 Z" fill="#8a8a8a" stroke="#8a8a8a" stroke-width="1.5" stroke-linejoin="round"/></svg><div class="abs" style="left:10px;top:624px;width:1285px;height:15px;background:#fafafa"></div><svg class="abs" style="left:13px;top:627px" width="8" height="10" viewBox="0 0 8 10"><path d="M7 1 L1 5 L7 9 Z" fill="#8a8a8a" stroke="#8a8a8a" stroke-width="1.5" stroke-linejoin="round"/></svg><div class="abs" style="left:27px;top:627px;width:877px;height:9px;background:#8a8a8a;border-radius:5px"></div><svg class="abs" style="left:1269px;top:627px" width="8" height="10" viewBox="0 0 8 10"><path d="M1 1 L7 5 L1 9 Z" fill="#8a8a8a" stroke="#8a8a8a" stroke-width="1.5" stroke-linejoin="round"/></svg><div class="abs" style="left:1134px;top:56px;width:169px;height:51px;border:4px solid #e8141e"></div></body></html>
